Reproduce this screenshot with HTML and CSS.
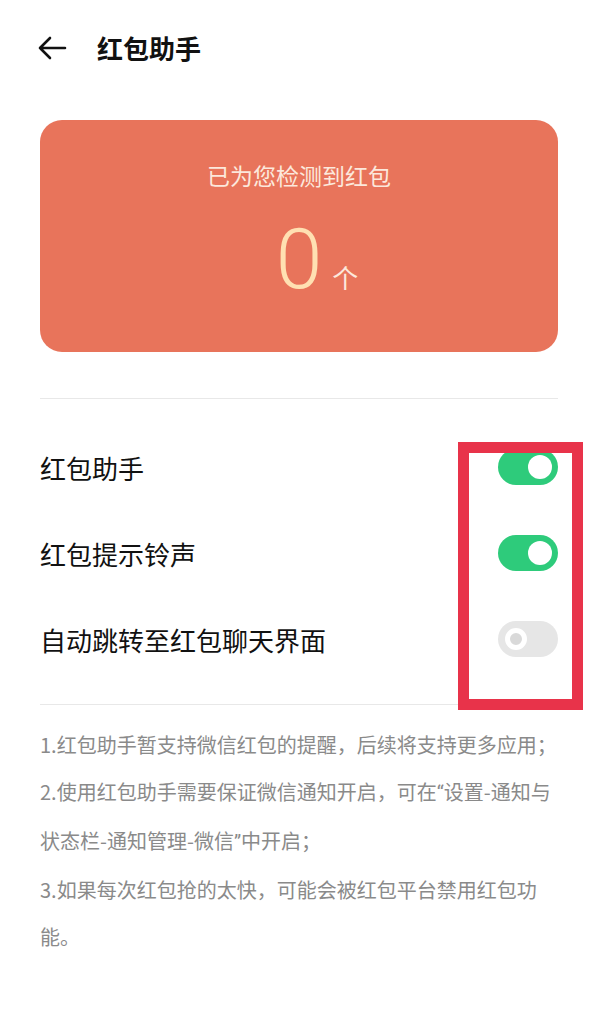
FILE: index.html
```html
<!DOCTYPE html>
<html lang="zh-CN">
<head>
<meta charset="utf-8">
<title>红包助手</title>
<link rel="stylesheet" href="styles.css">
</head>
<body>
<div class="page">
  <header class="header">
    <svg class="back" width="30" height="30" viewBox="0 0 30 30" aria-hidden="true">
      <path d="M28 15H3M13 5L3 15l10 10" fill="none" stroke="#111" stroke-width="2.6" stroke-linecap="round" stroke-linejoin="round"/>
    </svg>
    <h1 class="title">红包助手</h1>
  </header>

  <section class="card">
    <div class="card-title">已为您检测到红包</div>
    <div class="count">
      <span class="num">0</span>
      <span class="unit">个</span>
    </div>
  </section>

  <div class="divider"></div>

  <ul class="settings">
    <li class="row"><span class="label">红包助手</span><span class="switch on"><span class="knob"></span></span></li>
    <li class="row"><span class="label">红包提示铃声</span><span class="switch on"><span class="knob"></span></span></li>
    <li class="row"><span class="label">自动跳转至红包聊天界面</span><span class="switch off"><span class="knob"></span></span></li>
  </ul>

  <div class="divider"></div>

  <div class="notes">
    <p>1.红包助手暂支持微信红包的提醒，后续将支持更多应用；</p>
    <p>2.使用红包助手需要保证微信通知开启，可在<span class="quote">“</span>设置-通知与状态栏-通知管理-微信<span class="quote">”</span>中开启；</p>
    <p>3.如果每次红包抢的太快，可能会被红包平台禁用红包功能。</p>
  </div>

  <div class="highlight"></div>
</div>
</body>
</html>
```

FILE: styles.css
```css
* { box-sizing: border-box; }
html, body { margin: 0; padding: 0; background: #fff; }
body {
  font-family: "Noto Sans CJK SC", "Noto Sans", sans-serif;
  color: #111;
  width: 598px;
}
.page {
  position: relative;
  padding: 0 40px;
}
.header {
  height: 96px;
  display: flex;
  align-items: center;
  gap: 30px;
  margin-left: -3px;
}
.back { display: block; flex: none; }
.title {
  margin: 0;
  font-size: 26px;
  font-weight: 700;
  line-height: 1;
  color: #111;
}
.card {
  margin-top: 24px;
  height: 232px;
  background: #E8745B;
  border-radius: 22px;
  padding-top: 44px;
  display: flex;
  flex-direction: column;
  align-items: center;
}
.card-title {
  font-size: 23px;
  line-height: 23px;
  color: #FCE8DC;
}
.count {
  margin-top: 31px;
  width: 100%;
  display: grid;
  grid-template-columns: 1fr auto 1fr;
  align-items: baseline;
}
.num {
  grid-column: 2;
  font-family: Roboto, "Noto Sans", sans-serif;
  font-weight: 300;
  font-size: 84px;
  line-height: 84px;
  color: #FFE0B2;
}
.unit {
  grid-column: 3;
  justify-self: start;
  margin-left: 10px;
  font-size: 26px;
  color: #FCE8DC;
}
.divider {
  height: 1px;
  background: #E8E8E8;
}
.card + .divider { margin-top: 46px; }
.settings {
  list-style: none;
  margin: 0;
  padding: 25px 0 22px;
}
.row {
  height: 86px;
  display: flex;
  align-items: center;
  justify-content: space-between;
}
.label {
  font-size: 26px;
  color: #111;
}
.switch {
  position: relative;
  width: 60px;
  height: 36px;
  border-radius: 18px;
  display: flex;
  align-items: center;
}
.switch.on {
  background: #2ECB7B;
  justify-content: flex-end;
  padding-right: 6px;
}
.switch.on .knob {
  width: 24px;
  height: 24px;
  border-radius: 50%;
  background: #fff;
}
.switch.off {
  background: #E6E6E6;
  padding-left: 7px;
}
.switch.off .knob {
  width: 22px;
  height: 22px;
  border-radius: 50%;
  background: #D9D9D9;
  border: 5px solid #fff;
}
.notes {
  padding-top: 16px;
}
.notes p {
  margin: 0;
  font-size: 20px;
  line-height: 47px;
  color: #8A8A8A;
}
.quote {
  font-family: Roboto, "Noto Sans", sans-serif;
}
.highlight {
  position: absolute;
  left: 458px;
  top: 442px;
  width: 125px;
  height: 268px;
  border: 11px solid #E8334A;
}
```
